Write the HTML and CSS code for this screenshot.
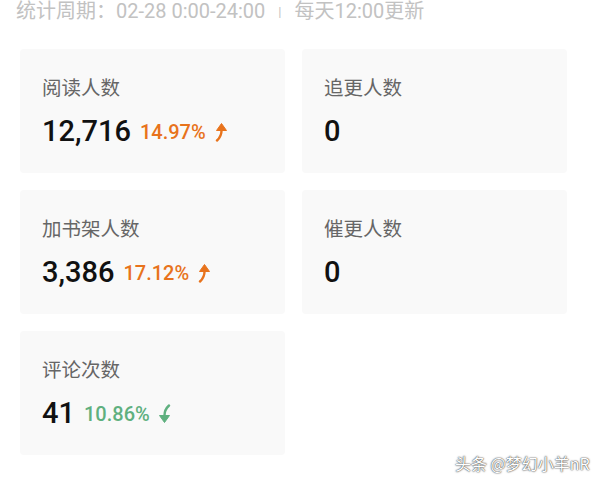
FILE: index.html
```html
<!DOCTYPE html>
<html lang="zh">
<head>
  <meta charset="UTF-8">
  <title>数据统计</title>
  <link rel="stylesheet" href="styles.css">
</head>
<body>
  <div class="period">统计周期：02-28 0:00-24:00 <span class="sep">|</span> 每天12:00更新</div>
  <div class="stats">
    <div class="card">
      <div class="label">阅读人数</div>
      <div class="value">
        <span class="num">12,716</span>
        <span class="rate up">14.97%</span>
        <svg class="arrow up" width="14" height="20" viewBox="0 0 14 20"><path d="M3 18.5 Q8 14 7.5 7" fill="none" stroke="currentColor" stroke-width="2.4" stroke-linecap="round"/><path d="M2.5 8.5 L7.5 1.5 L12.5 8.5 Z" fill="currentColor" stroke="currentColor" stroke-width="1" stroke-linejoin="round"/></svg>
      </div>
    </div>
    <div class="card">
      <div class="label">追更人数</div>
      <div class="value"><span class="num">0</span></div>
    </div>
    <div class="card">
      <div class="label">加书架人数</div>
      <div class="value">
        <span class="num">3,386</span>
        <span class="rate up">17.12%</span>
        <svg class="arrow up" width="14" height="20" viewBox="0 0 14 20"><path d="M3 18.5 Q8 14 7.5 7" fill="none" stroke="currentColor" stroke-width="2.4" stroke-linecap="round"/><path d="M2.5 8.5 L7.5 1.5 L12.5 8.5 Z" fill="currentColor" stroke="currentColor" stroke-width="1" stroke-linejoin="round"/></svg>
      </div>
    </div>
    <div class="card">
      <div class="label">催更人数</div>
      <div class="value"><span class="num">0</span></div>
    </div>
    <div class="card">
      <div class="label">评论次数</div>
      <div class="value">
        <span class="num">41</span>
        <span class="rate down">10.86%</span>
        <svg class="arrow down" width="14" height="20" viewBox="0 0 14 20"><path d="M11 1.5 Q6 6 6.5 13" fill="none" stroke="currentColor" stroke-width="2.4" stroke-linecap="round"/><path d="M1.5 11.5 L6.5 18.5 L11.5 11.5 Z" fill="currentColor" stroke="currentColor" stroke-width="1" stroke-linejoin="round"/></svg>
      </div>
    </div>
  </div>
  <div class="mark">头条 @梦幻小羊nR</div>
</body>
</html>
```

FILE: styles.css
```css
body {
  margin: 0;
  background: #fff;
  font-family: Roboto, "Noto Sans CJK SC", sans-serif;
  width: 600px;
  height: 484px;
  overflow: hidden;
  position: relative;
}
.period {
  margin: 0 0 0 16px;
  height: 49px;
  line-height: 22px;
  font-size: 20px;
  color: #c2c2c2;
  white-space: nowrap;
}
.period .sep {
  display: inline-block;
  font-size: 13px;
  margin: 0 8px;
  vertical-align: 2px;
}
.stats {
  display: grid;
  grid-template-columns: 265px 265px;
  grid-auto-rows: 124px;
  gap: 17px;
  padding-left: 20px;
}
.card {
  background: #f9f9f9;
  border-radius: 4px;
  padding: 26px 22px 0;
  box-sizing: border-box;
}
.label {
  font-family: "Noto Sans CJK SC", sans-serif;
  font-size: 19.5px;
  line-height: 24px;
  color: #666;
}
.value {
  display: flex;
  align-items: center;
  margin-top: 14px;
  height: 36px;
}
.num {
  font-size: 29px;
  font-weight: 500;
  color: #111;
  letter-spacing: 0;
}
.rate {
  font-size: 20px;
  font-weight: 500;
  margin-left: 9px;
  margin-top: 2px;
}
.up { color: #e8731c; }
.down { color: #5fb07f; }
.arrow {
  margin-left: 8px;
  margin-top: 2px;
}
.mark {
  position: absolute;
  left: 455px;
  top: 451px;
  font-family: "Noto Sans CJK SC", sans-serif;
  font-size: 16px;
  color: #fff;
  text-shadow: 0 0 1px #333, 0 0 2px #555;
}
```
